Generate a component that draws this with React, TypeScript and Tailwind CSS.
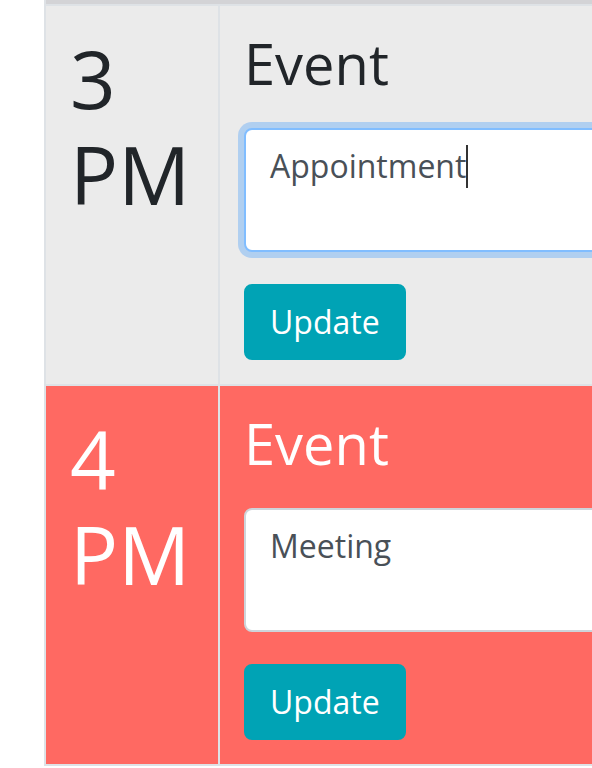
import React from 'react'

const rows = [
  { hour: '3 PM', text: 'Appointment', past: false, focused: true },
  { hour: '4 PM', text: 'Meeting', past: true, focused: false },
]

export default function App() {
  return (
    <div className="w-[592px] h-[768px] overflow-hidden bg-white font-['Open_Sans',sans-serif]">
      <div className="ml-[44px] w-[760px] border-l-2 border-[#dee2e6]">
        <div className="h-[4px] bg-[#d3d3d6]" />
        {rows.map((r) => (
          <div
            key={r.hour}
            className={
              'flex border-t-2 border-b-0 border-[#dee2e6] ' +
              (r.past ? 'bg-[#ff6962] text-white' : 'bg-[#ebebeb] text-[#212529]')
            }
          >
            <div className="w-[174px] shrink-0 border-r-2 border-[#dee2e6] p-[24px]">
              <div className="text-[80px] leading-[1.2]">{r.hour}</div>
            </div>
            <div className="flex-1 p-[24px]">
              <h3 className="text-[56px] leading-[1.2] mb-[31px]">Event</h3>
              <div
                className={
                  'w-[520px] h-[124px] bg-white rounded-[8px] border-2 px-[24px] py-[12px] text-[32px] leading-[48px] text-[#495057] ' +
                  (r.focused
                    ? 'border-[#80bdff] shadow-[0_0_0_6px_rgba(0,123,255,0.25)]'
                    : 'border-[#ced4da]')
                }
              >
                {r.text}
                {r.focused && (
                  <span className="inline-block w-[1.5px] h-[43px] bg-[#333] align-[-10px]" />
                )}
              </div>
              <button className="mt-[32px] rounded-[8px] border-2 border-[#00a3b5] bg-[#00a3b5] px-[24px] py-[12px] text-[32px] leading-[48px] text-white">
                Update
              </button>
            </div>
          </div>
        ))}
        <div className="border-t-2 border-[#dee2e6]" />
      </div>
    </div>
  )
}
